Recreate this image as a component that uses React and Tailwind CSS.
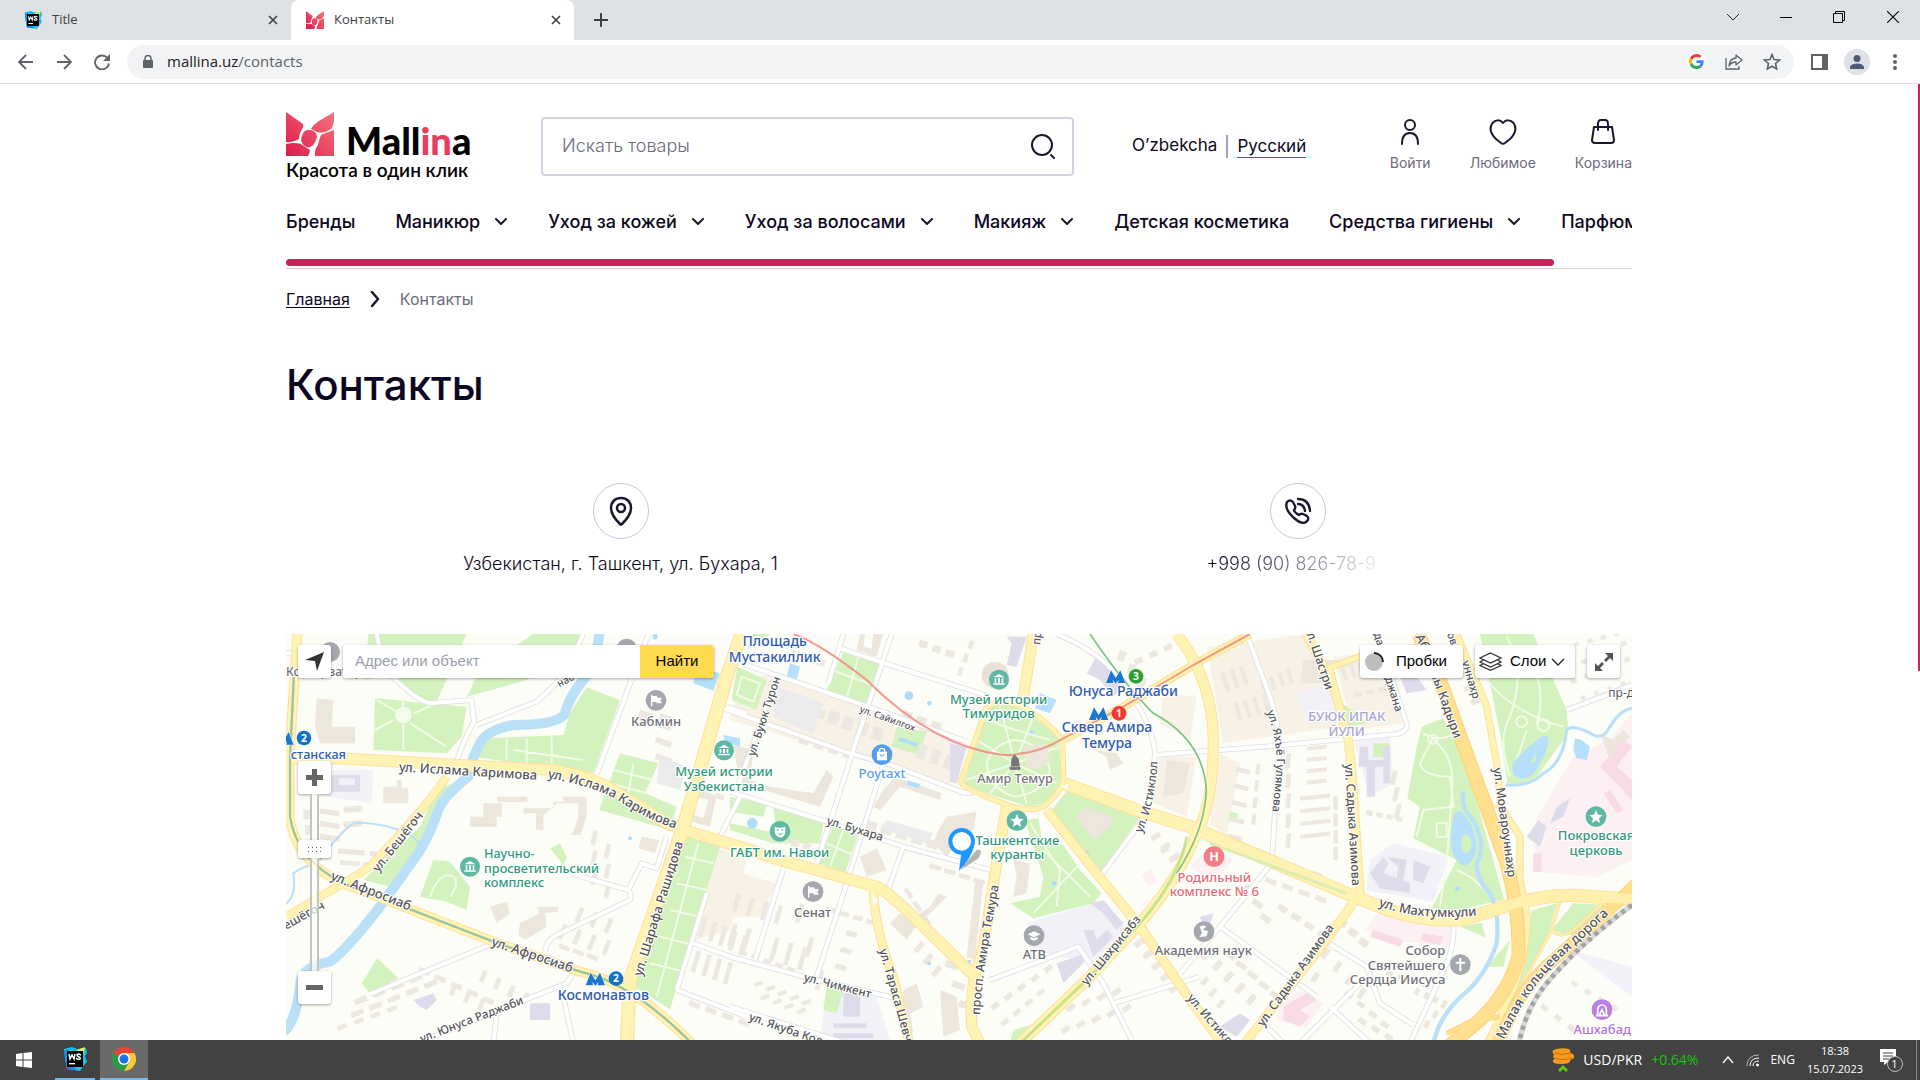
import React from "react";

const UI = "font-['Open_Sans','Noto_Sans',sans-serif]";
const SITE = "font-['Inter','Noto_Sans',sans-serif]";
const ARIAL = "font-['Liberation_Sans',Arial,sans-serif]";

/* ---------- shared icons ---------- */

function LogoMark({ className }) {
  return (
    <svg viewBox="0 0 48 44" className={className} aria-hidden="true" preserveAspectRatio="none">
      <defs>
        <linearGradient id="petal" x1="0" y1="44" x2="48" y2="0" gradientUnits="userSpaceOnUse">
          <stop offset="0" stopColor="#e0194a" />
          <stop offset="1" stopColor="#f4747c" />
        </linearGradient>
      </defs>
      <g fill="url(#petal)">
        <path d="M0 0 L17 12 Q18 15 15 19 Q13 23 13 27 Q7 31 0 30 Z" />
        <path d="M48 0 Q49 9 46 16 Q39 22 31 20 L25 17 Q28 12 33 9 Z" />
        <path d="M22 18 C29 17 33 23 30 28 C28 34 24 36 21 35 C16 33 14 29 16 24 C17 20 19 18 22 18 Z" />
        <path d="M0 32 Q9 30 15 32 Q21 36 24 38 Q24 41 22 44 L0 44 Z" />
        <path d="M48 18 L48 44 L29 44 Q28 38 32 33 Q33 28 35 23 Q41 20 48 18 Z" />
      </g>
    </svg>
  );
}

function WebStormIcon({ className }) {
  return (
    <svg viewBox="0 0 24 24" className={className} aria-hidden="true">
      <path d="M1 2 L9 0 L14 2 L23 1 L24 6 L22 9 L24 15 L21 18 L17 24 L4 22 L2 12 Z" fill="#10c4e8" />
      <path d="M1 4 L5 2 L8 18 L14 23 L4 22 Z" fill="#1489d8" />
      <path d="M14 3 L22 0 L20 8 Z" fill="#f3ee4c" />
      <rect x="4" y="4" width="16" height="16" fill="#000" />
      <path d="M6 7 L7 12 L9 8 L11 12 L12 7 M18 8 Q14 6 14 8 Q14 9 16 10 Q18 11 17 12 Q15 13 13 11" fill="none" stroke="#fff" strokeWidth="1.5" />
      <rect x="6" y="16" width="6" height="1.4" fill="#fff" />
    </svg>
  );
}

function Cross({ className }) {
  return (
    <svg viewBox="0 0 10 10" className={className} aria-hidden="true">
      <path d="M1 1 L9 9 M9 1 L1 9" stroke="currentColor" strokeWidth="1.6" fill="none" />
    </svg>
  );
}

/* ---------- browser ---------- */

function TabStrip() {
  return (
    <div className="flex h-10 items-stretch bg-[#dee1e6] text-[13px] text-[#3c4043]">
      <div className="flex w-[291px] items-center pl-6 pr-[10px]">
        <WebStormIcon className="size-[18px]" />
        <span className="ml-[10px] flex-1">Title</span>
        <button type="button" aria-label="Закрыть вкладку Title" className="grid size-4 place-items-center">
          <Cross className="size-[10px]" />
        </button>
      </div>
      <div className="flex w-[283px] items-center rounded-t-lg bg-white pl-[15px] pr-[10px]">
        <LogoMark className="size-[18px]" />
        <span className="ml-[10px] flex-1">Контакты</span>
        <button type="button" aria-label="Закрыть вкладку Контакты" className="grid size-4 place-items-center">
          <Cross className="size-[10px]" />
        </button>
      </div>
      <button type="button" aria-label="Новая вкладка" className="grid w-[53px] place-items-center">
        <svg viewBox="0 0 14 14" className="size-[14px]"><path d="M7 0 V14 M0 7 H14" stroke="#3c4043" strokeWidth="2" /></svg>
      </button>
      <div className="ml-auto flex items-center pb-[6px]">
        <button type="button" aria-label="Поиск вкладок" className="grid h-[34px] w-[53px] place-items-center">
          <svg viewBox="0 0 12 8" className="h-2 w-3"><path d="M0 1 L6 7 L12 1" fill="none" stroke="#222" /></svg>
        </button>
        <button type="button" aria-label="Свернуть" className="grid h-[34px] w-[53px] place-items-center">
          <span className="h-px w-3 bg-black" />
        </button>
        <button type="button" aria-label="Восстановить" className="grid h-[34px] w-[54px] place-items-center">
          <svg viewBox="0 0 12 12" className="size-3"><path d="M.5 2.5 H9.500 V11.500 H.5 Z M2.500 2.500 V.5 H11.500 V9.500 H9.500" fill="none" stroke="#000" /></svg>
        </button>
        <button type="button" aria-label="Закрыть" className="grid h-[34px] w-[54px] place-items-center">
          <svg viewBox="0 0 12 12" className="size-3"><path d="M0 0 L12 12 M12 0 L0 12" stroke="#000" strokeWidth="1.1" /></svg>
        </button>
      </div>
    </div>
  );
}

function Toolbar() {
  return (
    <div className="flex h-11 items-center border-b border-[#dadce0] bg-white pl-[18px] pr-5 text-[#5f6368]">
      <button type="button" aria-label="Назад" className="grid w-4 place-items-center">
        <svg viewBox="0 0 16 16" className="size-4"><path d="M15 8 H2 M8 1 L1 8 L8 15" fill="none" stroke="currentColor" strokeWidth="1.8" /></svg>
      </button>
      <button type="button" aria-label="Вперёд" className="ml-[22px] grid w-4 place-items-center">
        <svg viewBox="0 0 16 16" className="size-4"><path d="M1 8 H14 M8 1 L15 8 L8 15" fill="none" stroke="currentColor" strokeWidth="1.8" /></svg>
      </button>
      <button type="button" aria-label="Обновить" className="ml-[22px] grid w-4 place-items-center">
        <svg viewBox="0 0 16 16" className="size-4">
          <path d="M13.500 4 A7 7 0 1 0 15 9.500" fill="none" stroke="currentColor" strokeWidth="1.9" />
          <path d="M16 0 V7 H9 Z" fill="currentColor" />
        </svg>
      </button>
      <div className="ml-[17px] flex h-[34px] flex-1 items-center rounded-full bg-[#f1f3f4] pl-4 pr-[13px]">
        <svg viewBox="0 0 10 13" className="h-[13px] w-[10px]">
          <path d="M2 6 V3.500 A3 3 0 0 1 8 3.500 V6" fill="none" stroke="currentColor" strokeWidth="1.500" />
          <rect y="5" width="10" height="8" rx="1" fill="currentColor" />
        </svg>
        <a href="#address" className="ml-[14px] flex-1 text-[15px]"><span className="text-[#202124]">mallina.uz</span>/contacts</a>
        <span className="grid size-[18px] place-items-center rounded-full bg-white">
          <svg viewBox="0 0 48 48" className="size-[15px]">
            <path fill="#ea4335" d="M24 9.500c3.500 0 6.700 1.200 9.200 3.600l6.900-6.900C35.900 2.400 30.500 0 24 0 14.600 0 6.500 5.400 2.600 13.200l8 6.200C12.400 13.700 17.700 9.500 24 9.500z" />
            <path fill="#4285f4" d="M47 24.600c0-1.600-.2-3.100-.4-4.600H24v9h12.900c-.6 3-2.200 5.500-4.700 7.200l7.700 6C44.400 38 47 31.800 47 24.600z" />
            <path fill="#fbbc05" d="M10.500 28.600a14.500 14.500 0 0 1 0-9.200l-8-6.200a24 24 0 0 0 0 21.600z" />
            <path fill="#34a853" d="M24 48c6.500 0 11.900-2.100 15.900-5.800l-7.700-6c-2.200 1.500-4.900 2.300-8.200 2.300-6.300 0-11.600-4.200-13.500-9.900l-8 6.200C6.500 42.600 14.600 48 24 48z" />
          </svg>
        </span>
        <button type="button" aria-label="Поделиться" className="ml-5 grid place-items-center">
          <svg viewBox="0 0 18 16" className="h-4 w-[18px]">
            <path d="M1 4 V15 H14 V12" fill="none" stroke="currentColor" strokeWidth="1.300" />
            <path d="M11 1 L17 6 L11 11 V8 Q6 8 4 12 Q4.500 4.500 11 4 Z" fill="none" stroke="currentColor" strokeWidth="1.300" strokeLinejoin="round" />
          </svg>
        </button>
        <button type="button" aria-label="Добавить в закладки" className="ml-5 grid place-items-center">
          <svg viewBox="0 0 18 17" className="h-[17px] w-[18px]">
            <path d="M9 1.500 L11 6.500 L16.500 7 L12.500 10.500 L13.700 16 L9 13.200 L4.300 16 L5.500 10.500 L1.500 7 L7 6.500 Z" fill="none" stroke="currentColor" strokeWidth="1.600" />
          </svg>
        </button>
      </div>
      <button type="button" aria-label="Боковая панель" className="ml-[17px] grid place-items-center">
        <svg viewBox="0 0 17 16" className="h-4 w-[17px]"><path fill="currentColor" fillRule="evenodd" d="M0 0 H17 V16 H0 Z M2 2 V14 H11 V2 Z" /></svg>
      </button>
      <button type="button" aria-label="Профиль" className="ml-4 grid size-[26px] place-items-center rounded-full bg-[#dee1e6] text-[#4f5b73]">
        <svg viewBox="0 0 14 14" className="size-[14px]" fill="currentColor"><circle cx="7" cy="3.500" r="3.500" /><path d="M0 14 V12 Q1 8.500 7 8.500 Q13 8.500 14 12 V14 Z" /></svg>
      </button>
      <button type="button" aria-label="Меню" className="ml-5 grid w-[10px] place-items-center">
        <svg viewBox="0 0 4 16" className="h-4 w-1" fill="currentColor"><circle cx="2" cy="2" r="2" /><circle cx="2" cy="8" r="2" /><circle cx="2" cy="14" r="2" /></svg>
      </button>
    </div>
  );
}

/* ---------- site header ---------- */

const iconProps = { fill: "none", stroke: "#1b1730", strokeWidth: 2, strokeLinecap: "round", strokeLinejoin: "round" };

function Header() {
  return (
    <header className="flex h-[70px] items-center">
      <a href="#home" className="block w-[186px] whitespace-nowrap text-black" aria-label="Mallina">
        <span className="flex items-end">
          <LogoMark className="h-11 w-12" />
          <span className="ml-3 h-10 font-['Lato',sans-serif] text-[38px] leading-[48px] font-black">
            Mall<span className="text-[#e93d5e]">in</span>a
          </span>
        </span>
        <span className="mt-1 block font-['Lato',sans-serif] text-[19px] leading-5 font-semibold">Красота в один клик</span>
      </a>
      <form className="ml-[69px] flex h-[59px] w-[533px] items-center rounded border-2 border-[#d4d1e2] pl-[19px] pr-4" onSubmit={(e) => e.preventDefault()}>
        <input aria-label="Искать товары" placeholder="Искать товары" className="min-w-0 flex-1 text-lg font-light outline-none placeholder:text-[#6d6a7e]" />
        <button type="submit" aria-label="Найти товар" className="grid place-items-center">
          <svg viewBox="0 0 26 26" className="size-[26px]" {...iconProps}><circle cx="12" cy="12" r="10" /><path d="M21 22 L24 25" /></svg>
        </button>
      </form>
      <div className="ml-[58px] flex items-center text-[17px] text-[#0b0722]">
        <a href="#uz">O’zbekcha</a>
        <span className="mx-[9px] h-[23px] w-[2px] bg-[#a5a2b8]" />
        <a href="#ru" className="border-b border-[#d81b5b] leading-[22px]">Русский</a>
      </div>
      <div className="ml-auto flex gap-[39px] text-sm text-[#6d6a7e]">
        <a href="#login" className="flex flex-col items-center">
          <svg viewBox="0 0 20 26" className="h-[26px] w-5" {...iconProps}><circle cx="10" cy="6" r="5" /><path d="M2 25 Q2 14 10 14 Q18 14 18 25" /></svg>
          <span className="mt-2 leading-5">Войти</span>
        </a>
        <a href="#favorites" className="flex flex-col items-center">
          <svg viewBox="0 0 28 26" className="h-[26px] w-7" {...iconProps}><path d="M14 4 C17 0 22 1 24.500 4 C28 9 26 15 21 20 L16 24 Q14 25.500 12 24 L7 20 C2 15 0 9 3.500 4 C6 1 11 0 14 4 Z" /></svg>
          <span className="mt-2 leading-5">Любимое</span>
        </a>
        <a href="#cart" className="flex flex-col items-center">
          <svg viewBox="0 0 26 26" className="size-[26px]" {...iconProps}><path d="M4 8 H22 L24 21 Q24 24 21 24 H5 Q2 24 2 21 Z M8 11 V5 Q8 1 11 1 H15 Q18 1 18 5 V11" /></svg>
          <span className="mt-2 leading-5">Корзина</span>
        </a>
      </div>
    </header>
  );
}

const NAV = [
  ["Бренды", false],
  ["Маникюр", true],
  ["Уход за кожей", true],
  ["Уход за волосами", true],
  ["Макияж", true],
  ["Детская косметика", false],
  ["Средства гигиены", true],
  ["Парфюмерия", true],
];

function Nav() {
  return (
    <nav className="mt-[27px] overflow-hidden border-b border-[#d4d1e2]">
      <ul className="flex gap-10 text-lg leading-7 font-medium whitespace-nowrap text-[#0b0722]">
        {NAV.map(([label, more]) => (
          <li key={label}>
            <a href="#catalog" className="flex items-center gap-[14px]">
              {label}
              {more && <svg viewBox="0 0 14 8" className="h-2 w-[14px]" {...iconProps}><path d="M2 1 L7 6 L12 1" /></svg>}
            </a>
          </li>
        ))}
      </ul>
      <div className="mt-[23px] mb-[2px] h-[7px] w-[1268px] rounded-full bg-[#d81b5b]" />
    </nav>
  );
}

function ContactCircle({ children }) {
  return <span className="grid size-14 place-items-center rounded-full border border-[#c9c5dc]">{children}</span>;
}

/* ---------- map drawing ---------- */

const PARKS = [
  "M265 12 H560 L470 215 L430 210 L330 130 L255 150 Z",
  "M760 12 H905 L890 60 L740 150 L560 200 L600 120 Z",
  "M285 205 L345 210 L435 220 L560 230 L545 320 L500 370 L280 360 Z",
  "M920 172 L1020 210 L940 430 L590 382 L622 325 L850 315 L870 250 Z",
  "M1020 370 L1135 400 L1095 490 L1190 530 L1170 600 L958 540 Z",
  "M470 480 L555 445 L480 530 L430 640 L330 770 L250 750 L420 590 Z",
  "M1205 615 L1320 650 L1170 1138 L1065 1070 Z",
  "M420 800 L460 690 L510 695 L570 770 L560 840 L500 815 Z",
  "M245 1060 L292 985 L355 1045 L270 1092 Z",
  "M810 655 L840 640 L860 680 L850 705 Z",
  "M1372 110 L1460 150 L1430 240 L1355 210 Z",
  "M1690 65 L1800 100 L1765 222 L1640 180 Z",
  "M1850 290 L1940 305 L1915 375 L1835 350 Z",
  "M2120 232 Q2170 210 2220 235 L2335 315 L2345 445 Q2320 530 2240 528 L2050 468 Z",
  "M2365 478 L2580 562 L2460 730 L2310 545 Z",
  "M2235 570 L2275 565 L2285 620 L2350 645 L2400 720 L2465 790 L2440 820 L2260 865 L2190 820 L2280 800 L2290 740 Z",
  "M1660 585 L1735 610 L1695 730 L1615 700 Z",
  "M1350 500 L1460 522 L1450 560 L1350 545 Z M1480 530 L1630 580 L1620 640 L1480 640 L1350 600 V580 L1490 610 Z",
  "M1420 12 H1470 L1400 60 Z",
  "M3600 12 H3760 L3820 150 L3860 240 L3865 310 L3770 440 L3730 465 L3682 460 L3662 320 Z",
  "M3425 290 L3490 265 L3550 370 L3620 620 L3672 808 L3530 842 L3455 835 L3530 690 L3400 625 L3420 530 L3382 505 L3410 350 Z",
  "M3540 890 L3605 878 L3618 925 L3590 910 Z",
  "M3755 842 L3830 820 L3800 930 L3700 1110 L3735 980 Z",
  "M3880 820 L3990 825 L3890 920 L3815 900 Z",
  "M3620 1010 L3690 930 L3670 1010 Z",
  "M3180 215 L3230 250 L3260 280 L3200 290 Z",
  "M3280 340 H3328 V382 H3280 Z M2850 545 L2875 550 L2870 575 L2845 570 Z",
  "M1640 1070 L1690 1085 L1670 1150 L1630 1140 Z M2200 1200 L2270 1180 L2220 1240 H2190 Z",
];

const PINK = [
  "M4056 250 L3990 330 L3880 380 L3820 480 L3770 560 L3760 725 L3950 742 L4056 690 Z",
  "M3300 840 L3520 880 L3510 950 L3330 930 L3255 900 Z",
  "M2730 710 L2790 650 L2860 690 L2800 760 Z",
  "M2610 715 L2635 755 L2605 770 L2585 735 Z",
  "M3000 1120 L3060 1080 L3130 1120 L3080 1190 L2990 1170 Z",
];

const SAND = [
  "M1500 130 L2050 320 L2010 470 L1350 270 L1380 150 Z",
  "M1300 650 L1400 690 L1350 900 L1240 930 L1270 780 Z",
  "M1350 720 L1490 760 L1440 860 L1350 860 Z",
  "M2780 50 L3080 12 L3180 290 L2830 340 Z",
  "M2820 370 L2880 400 L2840 620 L2790 580 Z",
  "M3160 80 L3340 60 L3370 280 L3220 300 Z",
  "M2650 190 L2750 200 L2730 330 L2640 280 Z",
  "M2640 380 H2750 L2720 560 L2600 510 Z",
];

const LILAC = [
  "M3340 640 L3505 680 L3460 815 L3260 780 L3270 690 Z",
  "M3220 330 L3330 320 L3340 460 L3270 500 Z",
  "M2240 880 L2440 820 L2540 890 L2440 1000 L2250 960 Z",
  "M150 420 H280 L275 520 L140 500 Z",
  "M1640 1080 L1790 1100 L1830 1230 H1620 Z",
  "M3050 190 L3150 160 L3190 240 L3080 270 Z",
  "M3870 960 L4056 1010 V1100 Z",
];

const BLOCKS = [
  "M110 205 L160 210 L155 290 L225 290 V340 H120 L105 290 Z",
  "M610 520 H665 V560 H650 V590 H570 V560 H610 Z M652 500 H742 V516 H652 Z M730 535 H820 V515 H850 V500 H920 V560 L900 615 H875 L895 565 V520 H830 L790 555 V600 H768 V550 H730 Z",
  "M1085 620 L1138 630 L1125 670 L1075 655 Z M1255 480 L1310 495 L1290 590 L1235 575 L1240 555 L1270 565 L1285 510 L1250 500 Z",
  "M310 470 H350 V450 H365 V475 H385 V520 H310 Z",
  "M720 880 L780 850 L770 830 L835 830 V845 L795 850 L800 890 L735 930 L715 915 Z",
  "M630 830 L680 815 L690 850 L650 880 Z",
  "M1780 12 H1810 L1790 80 L1730 60 L1740 12 L1755 14 L1750 50 L1775 56 Z",
  "M1810 480 L1845 440 L1985 490 L1980 510 L1860 470 L1800 540 L1780 530 Z",
  "M1740 680 L1790 655 L1820 720 L1760 740 Z",
  "M2000 560 L2090 545 L2080 600 L2050 620 L2000 680 L1960 640 L1975 600 Z",
  "M1950 830 L1975 790 L2000 800 L1900 900 L1880 930 L1830 880 L1860 850 L1890 870 Z",
  "M2085 760 L2110 755 L2085 990 L2060 980 Z",
  "M2230 350 L2300 340 L2310 390 L2280 420 L2240 410 Z",
  "M2440 360 L2510 370 L2530 400 L2490 420 L2480 380 Z",
  "M2660 390 L2730 400 L2710 490 L2650 500 Z",
  "M2410 530 L2500 560 L2490 590 L2440 630 L2390 560 Z",
  "M2200 690 L2250 700 L2240 790 L2200 800 L2210 740 Z",
  "M1870 1080 L1910 1060 L1930 1130 L1890 1150 L1900 1210 L1870 1200 Z M1980 1080 L2030 1100 L2040 1200 L1990 1220 Z",
  "M1360 345 L1420 360 L1410 450 L1470 470 L1600 490 L1640 420 L1660 440 L1620 530 L1380 460 Z",
  "M3070 90 H3220 V110 H3130 V160 H3060 Z",
  "M3960 310 L4000 330 L4030 300 L4050 320 L3990 390 Z",
];

const LILAC_BLOCKS = [
  "M155 435 H240 V485 H155 Z M175 445 H225 V465 H175 Z",
  "M3240 350 H3265 V390 H3310 V350 L3330 350 V460 H3310 V410 H3285 V500 H3260 V410 H3235 Z",
  "M3270 730 L3310 680 L3325 700 L3310 730 L3390 760 V790 L3300 775 Z M3320 680 L3380 690 L3370 750 L3350 745 L3355 710 Z M3400 690 L3450 710 L3430 760 L3400 750 Z",
  "M2180 20 H2240 L2210 110 L2180 105 L2195 40 Z M2010 340 L2060 350 L2030 460 L2010 455 Z",
  "M2420 130 L2450 80 L2500 120 L2540 150 L2500 200 L2460 150 Z",
  "M2430 820 L2470 810 L2530 880 L2510 900 L2470 850 Z M2410 900 L2440 900 L2450 930 L2480 900 L2500 920 L2440 980 Z",
  "M2330 1000 L2420 970 L2410 1000 L2350 1060 Z",
  "M2760 860 L2800 850 L2780 920 Z M2820 1190 L2880 1150 L2910 1170 L2870 1220 Z",
  "M3740 620 L3775 570 L3800 590 L3780 650 Z M3830 530 L3870 505 L3850 560 L3810 580 Z",
  "M400 1110 L460 1090 L470 1110 L440 1140 L420 1130 Z",
  "M750 1120 H810 V1170 H750 Z M1660 1180 H1760 V1195 H1660 Z M1660 1210 H1780 V1225 H1660 Z M1690 1090 H1740 V1160 H1690 Z",
  "M3360 140 H3410 L3440 180 L3380 190 Z",
];

const PINK_BLOCKS = [
  "M4056 350 L4010 410 L4056 450 V510 L3980 430 L3960 410 L4030 330 Z M3990 480 L4030 540 L4010 550 L3970 490 Z M3760 670 H3785 V725 H3760 Z",
  "M3280 900 L3370 930 L3360 950 L3270 920 Z M3430 910 L3490 920 L3480 945 L3420 930 Z",
  "M3010 1130 L3080 1090 L3110 1110 L3060 1140 L3090 1160 L3060 1190 L3010 1170 Z",
];

/* rows of small houses: x, y, step x, step y, count, width, height, angle */
const HOUSES = [
  [70, 540, 5, 45, 3, 22, 28, 0], [120, 535, 0, 38, 3, 60, 16, 8], [190, 530, 0, 45, 2, 56, 18, -4],
  [175, 655, 95, 8, 2, 80, 16, 4], [180, 690, 70, 6, 2, 60, 14, 4],
  [220, 1110, 55, -22, 4, 40, 18, -22], [210, 1150, 55, -22, 5, 40, 16, -22], [420, 1010, 48, 22, 5, 34, 16, 22],
  [520, 1060, 42, 22, 4, 14, 36, 22], [610, 1020, 42, 22, 4, 14, 36, 22], [170, 1190, 50, -18, 4, 30, 14, -22],
  [850, 880, 44, 16, 4, 14, 48, 22], [900, 830, 44, 16, 3, 14, 46, 22], [840, 940, 42, 14, 3, 34, 14, 22],
  [940, 600, 0, 60, 3, 14, 44, 12], [980, 640, 0, 60, 3, 14, 44, 12], [1110, 550, 20, 20, 1, 30, 16, 22],
  [1270, 860, 30, 14, 5, 14, 60, 16], [1250, 960, 32, 12, 4, 14, 66, 16], [1230, 1110, 50, 18, 4, 34, 16, 22],
  [1360, 880, 42, 14, 6, 14, 70, 16], [1370, 790, 42, 12, 4, 14, 56, 16], [1560, 820, 30, 100, 3, 14, 60, 16],
  [1640, 830, 40, 12, 4, 30, 14, 14], [1700, 900, -16, 50, 3, 34, 16, 16], [1420, 1060, 36, 14, 5, 28, 12, -20],
  [1440, 1100, 36, 14, 4, 28, 12, -20], [1380, 960, 36, 12, 5, 24, 12, 18], [1560, 320, 44, 14, 4, 30, 20, 16],
  [1560, 220, 44, 14, 3, 34, 26, 16], [1650, 240, 44, 16, 4, 32, 40, 16], [1870, 240, 44, 16, 3, 30, 18, 18],
  [1920, 340, 40, 16, 3, 26, 44, 18], [1540, 60, 36, 12, 3, 26, 20, 16], [1920, 30, 40, 14, 3, 26, 20, 16],
  [2070, 30, -16, 40, 3, 14, 26, 16], [1470, 600, 34, 12, 4, 24, 24, 16], [1760, 570, 46, 14, 5, 34, 26, 14],
  [1950, 700, 44, 14, 4, 36, 14, 16], [1870, 780, 26, 40, 4, 14, 34, -36], [1900, 960, 26, 36, 3, 36, 16, -50],
  [2000, 990, 20, 60, 3, 40, 20, 20], [2130, 1130, 40, -28, 5, 26, 16, -40], [2160, 1180, 36, -30, 4, 26, 14, -40],
  [2310, 1150, 46, -16, 5, 28, 16, -34], [2340, 1200, 46, -16, 5, 28, 16, -34], [2560, 940, 26, 34, 5, 32, 18, -34],
  [2610, 620, 30, 30, 3, 30, 16, -30], [2640, 660, 26, 28, 3, 26, 14, -30], [2520, 60, 30, 40, 3, 22, 30, 20],
  [2560, 90, 44, -20, 3, 26, 18, -26], [2820, 130, 28, -10, 3, 14, 60, -18], [2860, 220, 28, -8, 4, 12, 56, -18],
  [2940, 150, 26, -10, 4, 12, 44, -16], [2870, 410, -6, 50, 5, 44, 14, 14], [2930, 400, -4, 50, 4, 12, 34, 8],
  [3080, 350, 0, 34, 4, 60, 12, -6], [3060, 500, 0, 38, 4, 90, 12, -6], [3160, 500, 0, 50, 4, 14, 40, 0],
  [3020, 370, 0, 60, 5, 14, 44, 6], [3180, 110, 26, -6, 5, 12, 46, -18], [3220, 190, 36, -8, 4, 26, 12, -10],
  [3260, 540, 30, 6, 4, 20, 14, 14], [3340, 420, 6, 50, 3, 14, 44, 14], [2880, 640, 54, 20, 5, 36, 18, 22],
  [2960, 740, 50, 18, 4, 34, 16, 22], [2900, 760, 24, 44, 3, 34, 18, 36], [3000, 820, 40, 26, 4, 30, 18, 34],
  [2760, 980, 34, 34, 5, 34, 18, -50], [2840, 960, 34, 30, 5, 34, 16, 34], [2760, 1060, 24, 34, 3, 28, 14, -50],
  [3180, 860, 32, 30, 3, 30, 22, 34], [3120, 980, 36, 40, 4, 34, 16, -56], [3060, 1020, 30, 30, 2, 30, 16, -56],
  [3200, 1080, 36, 30, 4, 26, 16, 34], [3240, 1160, 40, 24, 4, 26, 16, 34], [3320, 1020, 36, 12, 4, 22, 14, 20],
  [3400, 1090, 28, 12, 3, 20, 14, -60], [3480, 1130, -26, 30, 3, 24, 14, -60], [3530, 130, 20, 40, 3, 24, 18, -20],
  [3860, 110, 40, -18, 5, 18, 14, -24], [3870, 150, 40, -16, 5, 18, 14, -24], [3900, 200, 40, -14, 4, 14, 12, -24],
  [3880, 40, 40, -10, 4, 16, 12, -24], [3880, 1050, 40, 24, 4, 20, 14, 40], [3790, 1120, 40, 30, 3, 22, 16, 40],
  [1260, 470, 50, 18, 3, 26, 16, 20], [1130, 270, 0, 50, 3, 50, 18, 20], [1080, 240, 60, 10, 2, 44, 30, 16],
];

const RIVERS = [
  ["M958 12 Q950 80 935 120 Q870 190 855 250 Q840 285 700 285 Q620 300 600 340 Q570 400 565 440 Q490 500 475 540 Q440 640 400 690 L300 830 Q200 960 150 995 Q60 1010 60 1070 Q50 1160 18 1200", 30],
  ["M120 690 Q200 580 230 578 Q330 580 400 620 L415 640", 6],
  ["M18 820 Q50 800 40 730 Q80 700 120 705", 6],
  ["M4056 235 Q4020 240 3990 290 Q3970 330 3940 315 Q3880 280 3860 300 Q3850 400 3790 430 Q3750 470 3680 465", 9],
  ["M3550 490 Q3540 530 3580 570 Q3620 650 3590 700 Q3590 750 3630 790 Q3660 850 3650 940 Q3620 1030 3560 1085 Q3480 1150 3460 1240", 13],
];

const PONDS = [
  "M3700 400 Q3720 370 3760 340 Q3800 300 3806 330 Q3800 370 3780 400 Q3760 450 3720 445 Q3690 435 3700 400 Z",
  "M3520 560 Q3530 530 3550 550 Q3590 600 3590 650 Q3580 710 3545 705 Q3510 680 3512 620 Z",
  "M3885 325 L3905 330 L3930 350 L3920 390 L3890 385 L3880 360 Z",
  "M2280 190 L2330 210 L2310 250 L2265 235 Z",
  "M1530 100 L1560 110 L1550 148 L1520 140 Z",
  "M1250 110 L1320 130 L1300 182 L1240 160 Z",
  "M1330 315 L1380 325 V350 L1335 335 Z",
];

const WHITE_ROADS = [
  "M290 12 L310 110 Q400 210 450 220 L575 210 L582 275 Q550 330 530 395",
  "M590 285 L770 215 L850 140 L910 12",
  "M1105 12 L950 432",
  "M270 1092 L640 940", "M795 965 Q800 930 830 915 L1050 810 Q1055 790 1045 780 L870 730 M1045 780 L1085 700 L1130 715 L1160 620",
  "M420 1235 L860 1060 L880 1030 M850 1100 L880 1240 M650 1150 L640 1240",
  "M1240 940 L1380 990 M1190 1080 L1400 1160 M1190 1080 L1280 790 M1340 230 L1400 250",
  "M18 70 H60 M1385 490 L1320 620",
  "M1370 95 L1750 225 L2060 335", "M1690 12 L1645 160", "M1680 55 L1830 105 L2130 200",
  "M1835 12 L1720 360 L1610 700", "M1330 235 L1710 370 L1820 400 L2050 488 L2080 488",
  "M1495 130 L1370 480", "M1350 485 L1640 575 L1870 650 L2140 722", "M1870 650 L1820 790",
  "M1810 400 L1700 760 L1610 1040", "M1515 700 L1425 990", "M1350 980 L1570 1040 L1850 1105",
  "M1350 1130 L1700 1240", "M2130 1050 L2395 950 L2470 1060 L2560 1240", "M2500 1120 L2760 1040",
  "M2460 740 L2580 580 Q2610 530 2625 370 Q2620 300 2570 220 Q2500 80 2330 12", "M2625 375 L2980 348 L3350 312 Q3385 305 3380 280 L3290 12",
  "M2900 12 L2970 200 Q3000 300 2998 340 L2975 700 L2820 890 L2700 1030", "M2820 890 L3110 1100",
  "M3130 930 L3260 1010 L3300 1120 L3400 1185", "M3520 880 Q3525 940 3500 1000 L3390 1240",
  "M3240 1060 L3060 1240 M3150 1130 L3270 1240 M2950 1180 L3010 1240", "M3860 240 L4056 165",
];

const YELLOW_ROADS = [
  ["M52 12 L28 385 V560 Q50 700 190 760 L640 935 L900 1025 Q1060 1060 1240 1245", 30],
  ["M28 385 H180 L360 395 L820 420 Q930 440 1000 480 L1160 580 L1210 600 L1380 650 L1500 690 L1790 770 Q1830 790 1910 870 L2085 1040", 36],
  ["M1385 12 L1340 140 L1210 590 L1120 850 L1050 1050 L1040 1240", 42],
  ["M500 440 Q440 530 270 710 L190 760 L18 860", 26],
  ["M2260 12 L2225 235", 34],
  ["M2120 232 L2042 455 Q2045 475 2170 520 Q2240 550 2290 530 Q2340 490 2350 455 L2348 330 Q2300 270 2225 228 Q2150 205 2120 232 Z", 18],
  ["M2180 530 L2150 700 L2110 950 L2085 1040 Q2070 1100 2075 1190 L2100 1240", 34],
  ["M2355 462 L2570 540 L2730 590 L3200 790 L3320 838 Q3440 878 3550 868 L3680 828 Q3800 790 3900 797 L4056 808", 40],
  ["M2690 12 Q2798 150 2800 330 Q2800 520 2750 610 Q2700 740 2580 880 L2430 1040 L2215 1245", 34],
  ["M2300 540 L2450 730 L2580 890 L2710 1080 L2830 1245", 30],
  ["M2350 330 L2530 230 L2740 105 L2910 12", 26],
  ["M3080 12 Q3120 100 3150 130 L3205 330 L3215 420 L3240 790 L3140 930 L2890 1245", 28],
  ["M1780 780 Q1785 900 1840 1040 L1890 1245", 28],
  ["M3150 112 L3260 72 L3420 50", 20],
  ["M3530 12 L3620 230 L3650 400 L3662 530 L3720 620 V750 L3742 860 Q3740 1000 3680 1120 L3620 1245", 22],
  ["M3650 530 L3640 530 Q3600 450 3590 420 M3840 810 L3815 900 Q3840 930 3880 900 L3990 800 M3815 900 L3680 1150", 10],
];

const ORANGE_ROADS = [
  ["M3415 12 L3480 150 L3600 480 L3680 700 Q3720 850 3715 980 Q3690 1080 3600 1170 L3510 1245", 42],
  ["M4070 760 Q3970 860 3820 990 Q3740 1060 3700 1140 L3650 1245", 38],
  ["M3500 1210 L3570 1175 L3660 1160", 14],
];

const STREETS = [
  ["s1", "M356 424 L780 450", "ул. Ислама Каримова", 39],
  ["s2", "M802 444 Q950 470 1020 515 Q1100 570 1200 600", "ул. Ислама Каримова", 39],
  ["s3", "M295 728 L440 545", "ул. Бешёгоч", 37],
  ["s4", "M18 900 L160 820", "ешёгоч", 37],
  ["s5", "M150 748 L420 855", "ул. Афросиаб", 39],
  ["s6", "M632 946 L900 1036", "ул. Афросиаб", 39],
  ["s7", "M1085 1040 L1225 590", "ул. Шарафа Рашидова", 38],
  ["s8", "M425 1238 L760 1110", "ул. Юнуса Раджаби", 35],
  ["s9", "M1424 380 L1520 90", "ул. Буюк Турон", 34],
  ["s10", "M1737 245 L1940 318", "ул. Сайилгох", 28],
  ["s11", "M1638 582 L1840 644", "ул. Бухара", 35],
  ["s12", "M1570 1052 L1800 1112", "ул. Чимкент", 35],
  ["s13", "M1405 1170 L1720 1280", "ул. Якуба Коласа", 35],
  ["s14", "M1798 960 L1890 1290", "ул. Тараса Шевченко", 36],
  ["s15", "M2100 1155 Q2105 1020 2170 700", "просп. Амира Темура", 37],
  ["s16", "M2420 1068 L2600 850", "ул. Шахрисабз", 36],
  ["s17", "M2585 610 Q2628 520 2635 360", "ул. Истиклол", 35],
  ["s18", "M2960 245 Q2990 320 2990 400 Q2985 480 2970 600", "ул. Яхъё Гулямова", 34],
  ["s19", "M3195 402 L3222 860", "ул. Садыка Азимова", 37],
  ["s20", "M2950 1192 L3180 870", "ул. Садыка Азимова", 37],
  ["s21", "M3295 828 Q3440 880 3640 850", "ул. Махтумкули", 39],
  ["s22", "M3640 415 Q3660 560 3690 790", "ул. Мовароуннахр", 37],
  ["s23", "M3672 1230 Q3740 1080 3840 985 Q3940 900 4040 800", "Малая кольцевая дорога", 40],
  ["s24", "M3452 130 L3545 390", "лы Кадыри", 38],
  ["s25", "M3405 20 L3450 110", "Аб", 38],
  ["s26", "M3080 12 L3165 260", "л. Шастри", 36],
  ["s27", "M3315 145 L3360 290", "джана", 34],
  ["s28", "M3545 95 L3600 280", "уннахр", 34],
  ["s29", "M2720 1105 L2880 1290", "ул. Истиклол", 36],
  ["s30", "M2280 46 L2290 -40", "пр", 34],
  ["s31", "M838 172 L900 140", "наб", 30],
  ["s32", "M3282 12 L3300 80", "да", 32],
  ["s33", "M3500 12 L3530 90", "ова", 32],
];

function Museum({ x, y }) {
  return (
    <g transform={`translate(${x} ${y})`}>
      <circle r="30" fill="#5fb8a5" />
      <path d="M-17 -7 L0 -17 L17 -7 Z M-13 -4 H-8 V9 H-13 Z M-3 -4 H3 V9 H-3 Z M8 -4 H13 V9 H8 Z M-17 11 H17 V15 H-17 Z" fill="#fff" />
    </g>
  );
}

function Star({ x, y }) {
  return (
    <g transform={`translate(${x} ${y})`}>
      <circle r="31" fill="#5fb8a5" />
      <path d="M0 -20 L6 -6 L20 -5 L9 5 L12 19 L0 11 L-12 19 L-9 5 L-20 -5 L-6 -6 Z" fill="#fff" />
    </g>
  );
}

function Flag({ x, y }) {
  return (
    <g transform={`translate(${x} ${y})`}>
      <circle r="31" fill="#a4a7ad" />
      <path d="M-15 -17 H-11 V-13 H2 L6 -8 H18 L13 1 L18 9 H4 L0 5 H-11 V18 H-15 Z" fill="#fff" />
    </g>
  );
}

function Metro({ x, y, line, color, lx }) {
  return (
    <g transform={`translate(${x} ${y})`}>
      <path d="M-29 20 L-14 -18 L0 5 L14 -18 L29 20 H7 L9 10 L0 22 L-9 10 L-7 20 Z" fill="#1c77cf" stroke="#fff" strokeWidth="3" paintOrder="stroke" />
      <circle cx={lx} r="22" fill={color} />
      <text x={lx} y="11" textAnchor="middle" fontSize="31" fontWeight="700" fill="#fff">{line}</text>
    </g>
  );
}

function Label({ x, y, lines, color, size = 39, anchor = "middle", step = 44, weight = 500 }) {
  return (
    <text textAnchor={anchor} fill={color} fontSize={size} fontWeight={weight} stroke="#fff" strokeWidth="7" strokeLinejoin="round" paintOrder="stroke">
      {lines.map((line, i) => (
        <tspan key={line} x={x} y={y + i * step}>{line}</tspan>
      ))}
    </text>
  );
}

function MapDrawing() {
  const green = "#2f9a80";
  const grey = "#6f7176";
  const blue = "#2f5cb0";
  return (
    <svg viewBox="18 12 4038 1218" preserveAspectRatio="xMidYMin slice" className="absolute inset-0 size-full font-['Noto_Sans',sans-serif]" role="img" aria-label="Карта Ташкента">
      <rect x="18" y="12" width="4038" height="1600" fill="#fcfdf6" />
      <path d={SAND.join(" ")} fill="#f8f1e6" />
      <path d={PINK.join(" ")} fill="#fcf0f2" />
      <path d={LILAC.join(" ")} fill="#f2f1f8" />
      <path d={PARKS.join(" ")} fill="#d3f2bd" />
      <g fill="none" stroke="#f3fbe9" strokeWidth="6">
        <path d="M370 205 V230 M370 280 V360 M285 300 L340 270 M400 250 L470 220 M390 280 L500 350 M290 210 L350 245" />
        <circle cx="370" cy="255" r="22" fill="#f3fbe9" />
        <path d="M680 325 V390 M740 325 V400 M815 320 V405 M700 360 L910 390 M1060 400 L1040 520 M1000 420 L1120 450 M990 460 L1100 490 M1255 640 L1130 1100 M1215 680 L1300 700 M1190 760 L1280 780 M1170 840 L1260 860 M1140 920 L1240 945 M1110 1000 L1215 1025" />
        <path d="M450 800 Q480 720 520 740 Q540 760 510 800" />
        <path d="M1655 120 L1780 165 M1735 80 L1700 205 M1385 140 L1440 160 L1420 215 L1370 195 Z" />
        <path d="M2205 330 Q2140 340 2120 400 Q2130 480 2205 500 Q2290 490 2310 420 Q2290 340 2205 330 M2205 400 L2060 450 M2205 400 L2160 230 M2205 400 L2260 260 M2205 400 L2340 350 M2205 400 L2330 460 M2205 400 L2240 520 M2205 400 L2130 490 M2205 400 L2090 330 M2120 270 Q2200 300 2310 330" />
        <path d="M2290 660 L2430 800 M2400 700 L2260 850 M2250 580 L2340 720 L2330 830 M1640 640 L1730 680 M1690 600 L1650 710" />
        <path d="M3620 150 Q3700 250 3850 290 M3680 20 Q3740 120 3690 260 Q3650 330 3690 440 M3750 60 Q3800 200 3770 280 M3740 300 L3700 420 M3460 320 L3420 400 Q3430 440 3510 440 L3520 530 L3430 540 L3410 620 M3460 330 Q3530 380 3515 500 L3500 700 L3480 830 M3470 580 H3500 V620 H3470 Z M3530 720 L3570 740 L3640 800 M3430 310 Q3480 340 3520 310" />
        <circle cx="3725" cy="275" r="16" fill="none" /><circle cx="3790" cy="285" r="18" fill="none" /><circle cx="3458" cy="328" r="14" />
      </g>
      <path d={BLOCKS.join(" ")} fill="#ece6dc" fillRule="evenodd" />
      <g fill="#ece7e0">
        {HOUSES.map(([x, y, dx, dy, n, w, h, a]) =>
          Array.from({ length: n }, (_, i) => (
            <rect key={`${x}-${y}-${i}`} width={w} height={h} transform={`translate(${x + dx * i} ${y + dy * i}) rotate(${a})`} />
          ))
        )}
      </g>
      <circle cx="2145" cy="135" r="40" fill="#e9e1d5" />
      <path d={LILAC_BLOCKS.join(" ")} fill="#dedbea" fillRule="evenodd" />
      <path d={PINK_BLOCKS.join(" ")} fill="#f8dbe4" />
      <path d="M1140 380 L1220 410 L1200 480 L1130 460 Z M1490 170 L1630 220 L1600 310 L1480 260 Z M1820 570 L1960 610 L1940 640 L1800 595 Z" fill="#ebebed" />

      <g fill="none" stroke="#b9e0f7" strokeLinecap="round">
        {RIVERS.map(([d, w]) => <path key={d} d={d} strokeWidth={w} />)}
      </g>
      <path d={PONDS.join(" ")} fill="#b5dffa" />
      <path d="M3750 400 L3770 370 L3765 395 Z M3545 620 Q3570 600 3575 650 Q3560 680 3545 660 Z" fill="#d3f2bd" />
      <g fill="#b0dcfa">
        <circle cx="1887" cy="197" r="13" /><circle cx="1948" cy="220" r="7" /><circle cx="1417" cy="580" r="16" />
        <circle cx="2254" cy="305" r="6" /><circle cx="2418" cy="672" r="9" /><circle cx="2322" cy="760" r="7" />
        <circle cx="1050" cy="625" r="6" /><circle cx="1947" cy="1000" r="6" /><circle cx="2068" cy="995" r="6" />
        <circle cx="3532" cy="776" r="7" /><circle cx="1125" cy="20" r="8" />
        <path d="M1860 322 L1915 340 L1910 350 L1855 332 Z M1885 452 L1920 462 L1915 474 L1880 464 Z" />
      </g>

      <g fill="none" strokeLinejoin="round">
        {WHITE_ROADS.map((d) => <path key={d} d={d} stroke="#dedfe2" strokeWidth="17" />)}
        {WHITE_ROADS.map((d) => <path key={d} d={d} stroke="#fff" strokeWidth="12" />)}
        {YELLOW_ROADS.map(([d, w]) => <path key={d} d={d} stroke="#ffdf9b" strokeWidth={w} />)}
        {YELLOW_ROADS.map(([d, w]) => <path key={d} d={d} stroke="#fff3b4" strokeWidth={w - 6} />)}
        {ORANGE_ROADS.map(([d, w]) => <path key={d} d={d} stroke="#ffd07a" strokeWidth={w} />)}
        {ORANGE_ROADS.map(([d, w]) => <path key={d} d={d} stroke="#ffe08f" strokeWidth={w - 6} />)}
        <path d="M3540 870 L3680 828 Q3800 790 3900 797 L4056 808" stroke="#fff0ad" strokeWidth="30" />
        <path d="M1775 790 L1795 812 L1780 830 Z M2345 470 L2362 462 L2362 480 Z" fill="#fcfdf6" stroke="none" />
        <path d="M42 130 L30 385 V560 Q50 690 190 760 L640 935 L900 1025 Q1060 1060 1240 1245" stroke="#9dc3a0" strokeWidth="7" />
        <path d="M2720 620 Q2700 740 2580 880 L2430 1040 L2215 1245" stroke="#a5d86e" strokeWidth="9" opacity=".6" />
        <path d="M2430 12 Q2530 160 2620 250 Q2770 330 2779 480 Q2775 600 2690 730" stroke="#7ec387" strokeWidth="5" />
        <path d="M2790 640 L3200 790" stroke="#dbedb0" strokeWidth="9" />
        <path d="M1540 12 Q1620 40 1760 150 Q1960 350 2170 375 Q2270 375 2350 325 L2530 230 L2740 105 L2910 12" stroke="#f2827a" strokeWidth="6" opacity=".8" />
        <path d="M4056 825 Q3900 940 3800 1060 Q3740 1130 3715 1245" stroke="#d8d8d8" strokeWidth="16" />
        <path d="M4056 825 Q3900 940 3800 1060 Q3740 1130 3715 1245" stroke="#a3a3a3" strokeWidth="14" strokeDasharray="13 13" />
      </g>

      <g fill="#55565a" stroke="#fff" strokeWidth="6" strokeLinejoin="round" paintOrder="stroke">
        {STREETS.map(([id, d, text, size]) => (
          <g key={id}>
            <path id={id} d={d} fill="none" stroke="none" />
            <text fontSize={size} fontWeight="500"><textPath href={`#${id}`}>{text}</textPath></text>
          </g>
        ))}
        <text x="3985" y="202" fontSize="36">пр-д</text>
      </g>

      <circle cx="150" cy="66" r="30" fill="#a4a7ad" />
      <Label x={18} y={138} lines={["Консерватория"]} color={grey} size={36} anchor="start" />
      <circle cx="1040" cy="56" r="30" fill="#a4a7ad" />
      <Flag x={1128} y={211} />
      <Label x={1128} y={288} lines={["Кабмин"]} color={grey} />
      <Metro x={12} y={324} line="2" color="#1273c4" lx={60} />
      <Label x={198} y={388} lines={["станская"]} color={blue} size={38} anchor="end" />
      <Museum x={1332} y={361} />
      <Label x={1332} y={438} lines={["Музей истории", "Узбекистана"]} color={green} />
      <Museum x={570} y={710} />
      <Label x={612} y={684} lines={["Научно-", "просветительский", "комплекс"]} color={green} size={38} anchor="start" />
      <Metro x={946} y={1046} line="2" color="#1273c4" lx={62} />
      <Label x={970} y={1110} lines={["Космонавтов"]} color={blue} size={42} />

      <Label x={1484} y={48} lines={["Площадь", "Мустакиллик"]} color={blue} size={42} step={48} />
      <Museum x={2157} y={149} />
      <Label x={2156} y={221} lines={["Музей истории", "Тимуридов"]} color={green} />
      <Metro x={2507} y={139} line="3" color="#2f9e35" lx={61} />
      <Label x={2530} y={198} lines={["Юнуса Раджаби"]} color={blue} size={42} />
      <Metro x={2456} y={250} line="1" color="#f2392f" lx={61} />
      <Label x={2481} y={307} lines={["Сквер Амира", "Темура"]} color={blue} size={42} step={48} />
      <g transform="translate(1806 374)">
        <circle r="31" fill="#549eeb" />
        <path d="M-15 -9 H15 V17 H-15 Z" fill="#fff" />
        <path d="M-8 -8 V-12 Q-8 -19 0 -19 Q8 -19 8 -12 V-8" fill="none" stroke="#fff" strokeWidth="4" />
        <path d="M-7 0 Q0 9 7 0" fill="none" stroke="#549eeb" strokeWidth="3" />
      </g>
      <Label x={1806} y={445} lines={["Poytaxt"]} color="#549eeb" />
      <path d="M2190 418 H2220 V412 H2190 Z M2194 408 L2196 385 H2214 L2218 408 Z M2198 382 Q2204 370 2206 378 L2212 384 Z" fill="#77757a" stroke="#77757a" strokeWidth="3" />
      <Label x={2205} y={460} lines={["Амир Темур"]} color="#77757a" size={38} />
      <g transform="translate(1500 604)">
        <circle r="31" fill="#5fb8a5" />
        <path d="M-16 -14 Q0 -8 16 -14 V4 Q12 18 2 19 Q-12 15 -16 4 Z" fill="#fff" />
        <path d="M-10 -4 H-3 M3 -4 H10 M-7 6 Q0 14 8 6" stroke="#5fb8a5" strokeWidth="3" fill="none" />
      </g>
      <Label x={1499} y={681} lines={["ГАБТ им. Навои"]} color={green} />
      <Star x={2211} y={572} />
      <Label x={2212} y={644} lines={["Ташкентские", "куранты"]} color={green} />
      <Flag x={1599} y={785} />
      <Label x={1598} y={860} lines={["Сенат"]} color={grey} />
      <g transform="translate(2262 917)">
        <circle r="31" fill="#a4a7ad" />
        <path d="M-19 -4 L0 -13 L19 -4 L0 5 Z M-11 3 L0 8 L11 3 V11 Q0 18 -11 11 Z" fill="#fff" />
      </g>
      <Label x={2263} y={988} lines={["АТВ"]} color={grey} />

      <Label x={3200} y={273} lines={["БУЮК ИПАК", "ЙУЛИ"]} color="#a7a6cf" size={39} />
      <circle cx="2802" cy="680" r="31" fill="#f27f86" />
      <text x="2802" y="694" textAnchor="middle" fontSize="38" fontWeight="700" fill="#fff">Н</text>
      <Label x={2803} y={755} lines={["Родильный", "комплекс № 6"]} color="#ea6b74" />
      <g transform="translate(2772 905)">
        <circle r="31" fill="#a4a7ad" />
        <path d="M-13 -14 Q0 -24 6 -14 L-4 -6 L12 -2 L8 14 L-14 16 L-6 4 Z" fill="#fff" />
      </g>
      <Label x={2770} y={976} lines={["Академия наук"]} color={grey} />
      <g transform="translate(3541 1004)">
        <circle r="31" fill="#a4a7ad" />
        <path d="M-3 -20 H3 V-9 H14 V-3 H3 V20 H-3 V-3 H-14 V-9 H-3 Z" fill="#fff" />
      </g>
      <Label x={3496} y={975} lines={["Собор", "Святейшего", "Сердца Иисуса"]} color={grey} anchor="end" />
      <Star x={3948} y={560} />
      <Label x={3948} y={631} lines={["Покровская", "церковь"]} color={green} />
      <g transform="translate(3966 1139)">
        <circle r="31" fill="#b87fdc" />
        <path d="M-13 17 V0 A13 14 0 0 1 13 0 V17 M-8 17 L0 0 L8 17 M-18 18 H18" fill="none" stroke="#fff" strokeWidth="5" />
      </g>
      <Label x={3967} y={1213} lines={["Ашхабад"]} color="#b375d6" />

      <path d="M2042 720 L2062 694 L2090 660 Q2112 656 2096 684 Z" fill="#777" opacity=".55" />
      <path d="M2037 722 L2044 670 L2082 650 Q2070 690 2037 722 Z" fill="#1e98ff" />
      <circle cx="2045" cy="634" r="40" fill="#1e98ff" />
      <circle cx="2045" cy="634" r="28" fill="#fff" />
    </svg>
  );
}

const control = "bg-white rounded-[3px] shadow-[0_1px_3px_rgba(0,0,0,0.35)]";

function YandexMap() {
  return (
    <section className={`relative min-h-[300px] flex-1 overflow-hidden ${ARIAL}`} aria-label="Карта">
      <MapDrawing />
      <div className="absolute inset-x-3 top-[11px] flex h-[33px] items-stretch text-[15px] text-black">
        <button type="button" aria-label="Моё местоположение" className={`grid w-[33px] place-items-center ${control}`}>
          <svg viewBox="0 0 19 19" className="size-[19px]"><path d="M19 0 L12 19 L10 9 L0 8 Z" fill="#333" /></svg>
        </button>
        <form className="ml-3 flex rounded-[3px] shadow-[0_1px_3px_rgba(0,0,0,0.35)]" onSubmit={(e) => e.preventDefault()}>
          <input aria-label="Адрес или объект" placeholder="Адрес или объект" className="w-[297px] rounded-l-[3px] bg-white px-3 outline-none placeholder:text-[#9a9eb0]" />
          <button type="submit" className="w-[74px] rounded-r-[3px] bg-[#ffdb4d]">Найти</button>
        </form>
        <button type="button" className={`ml-auto flex w-[103px] items-center pl-[5px] ${control}`}>
          <svg viewBox="0 0 19 19" className="size-[19px]"><circle cx="9" cy="10" r="9" fill="#bdbdbd" /><path d="M9 1 A9 9 0 0 1 18 10" fill="none" stroke="#222" strokeWidth="2" /></svg>
          <span className="ml-3">Пробки</span>
        </button>
        <button type="button" className={`ml-3 flex w-[100px] items-center pl-1 ${control}`}>
          <svg viewBox="0 0 23 19" className="h-[19px] w-[23px]" fill="none" stroke="#333" strokeWidth="1.300"><path d="M11.500 1 L22 6 L11.500 11 L1 6 Z M4 8 L1 10 L11.500 15 L22 10 L19 8 M4 12 L1 13.500 L11.500 18.300 L22 13.500 L19 12" /></svg>
          <span className="ml-2">Слои</span>
          <svg viewBox="0 0 14 8" className="ml-[5px] h-2 w-[14px]"><path d="M1 1 L7 7 L13 1" fill="none" stroke="#222" strokeWidth="1.300" /></svg>
        </button>
        <button type="button" aria-label="Развернуть карту" className={`ml-3 grid w-[33px] place-items-center ${control}`}>
          <svg viewBox="0 0 18 18" className="size-[18px]" fill="#555"><path d="M18 0 V8 L15 5 L11 9 L9 7 L13 3 L10 0 Z M0 18 V10 L3 13 L7 9 L9 11 L5 15 L8 18 Z" /></svg>
        </button>
      </div>
      <div className="absolute top-[127px] left-3 flex w-[33px] flex-col items-center">
        <button type="button" aria-label="Приблизить" className={`grid size-[33px] place-items-center ${control}`}>
          <svg viewBox="0 0 17 17" className="size-[17px]"><path d="M6 0 H11 V6 H17 V11 H11 V17 H6 V11 H0 V6 H6 Z" fill="#666" /></svg>
        </button>
        <div className="h-[46px] w-[9px] border-x-2 border-[#c4c4c0] bg-white/70" />
        <button type="button" aria-label="Масштаб" className={`grid h-[18px] w-[33px] place-items-center ${control}`}>
          <svg viewBox="0 0 13 5" className="h-[5px] w-[13px]"><path d="M0 .5 H13 M0 4.500 H13" stroke="#666" strokeDasharray="1 3" /></svg>
        </button>
        <div className="h-[113px] w-[9px] border-x-2 border-[#c4c4c0] bg-white/70" />
        <button type="button" aria-label="Отдалить" className={`grid size-[33px] place-items-center ${control}`}>
          <span className="h-[5px] w-[17px] bg-[#666]" />
        </button>
      </div>
    </section>
  );
}

/* ---------- taskbar ---------- */

function Taskbar() {
  return (
    <footer className="flex h-10 shrink-0 items-stretch bg-[#424242] text-white">
      <button type="button" aria-label="Пуск" className="grid w-12 place-items-center">
        <svg viewBox="0 0 16 16" className="size-4" fill="#fff"><path d="M0 2 L6.500 1 V7.500 H0 Z M7.500 1 L16 0 V7.500 H7.500 Z M0 8.500 H6.500 V15 L0 14 Z M7.500 8.500 H16 V16 L7.500 15 Z" /></svg>
      </button>
      <button type="button" aria-label="WebStorm" className="ml-[7px] grid w-10 place-items-center border-b-2 border-[#76b9ed]">
        <WebStormIcon className="size-6" />
      </button>
      <button type="button" aria-label="Google Chrome" className="ml-[5px] grid w-12 place-items-center border-b-2 border-[#76b9ed] bg-[#6a6a6a]">
        <svg viewBox="0 0 48 48" className="size-6">
          <circle cx="24" cy="24" r="24" fill="#2a9a48" />
          <path d="M24 24 L3.200 12 A24 24 0 0 1 44.800 12 Z" fill="#ea4335" />
          <path d="M24 12 H44.800 A24 24 0 0 1 24 48 L34.400 30 Z" fill="#fcc934" />
          <circle cx="24" cy="24" r="12" fill="#fff" /><circle cx="24" cy="24" r="9" fill="#1a73e8" />
        </svg>
      </button>
      <div className="ml-auto flex items-center">
        <svg viewBox="0 0 23 24" className="h-6 w-[23px]">
          <path d="M1 2 Q9 -1 17 1 Q19 3 18 5 Q23 6 22 10 Q18 12 18 13 Q18 16 9 16 Q0 16 1 12 L3 11 Q0 9 2 7 Q0 5 1 2 Z" fill="#f79a1e" />
          <path d="M2 5 Q9 8 18 5 M3 10 Q10 13 20 10" stroke="#c96f08" fill="none" />
          <path d="M7 23 L11 19 L15 23" stroke="#5ec40f" strokeWidth="3" fill="none" />
        </svg>
        <span className="ml-2 text-sm">USD/PKR</span>
        <span className="ml-[9px] text-sm text-[#16c60c]">+0.64%</span>
        <button type="button" aria-label="Показать скрытые значки" className="ml-6">
          <svg viewBox="0 0 12 8" className="h-2 w-3"><path d="M1 7 L6 1 L11 7" stroke="#fff" strokeWidth="1.300" fill="none" /></svg>
        </button>
        <svg viewBox="0 0 14 13" className="ml-3 h-[13px] w-[14px]" fill="none" stroke="#fff">
          <path d="M1 12 Q1 1 13 1" opacity=".6" /><path d="M4 12 Q4 4 13 4" /><path d="M7 12 Q7 7 13 7" /><circle cx="11.500" cy="11" r="1" fill="#fff" />
        </svg>
        <span className="ml-[10px] text-xs">ENG</span>
        <span className="ml-3 text-center text-[11px] leading-[18px]">18:38<br />15.07.2023</span>
        <button type="button" aria-label="Уведомления" className="relative ml-[17px] mr-[13px] h-6 w-[23px]">
          <svg viewBox="0 0 23 24" className="h-6 w-[23px]">
            <path d="M0 1 H16 V14 H8 L4 17 V14 H0 Z" fill="#fff" />
            <path d="M3 5 H13 M3 8 H13 M3 11 H9" stroke="#424242" strokeWidth="1.200" />
            <circle cx="15" cy="16" r="7.500" fill="#424242" stroke="#bbb" />
          </svg>
          <span className="absolute right-1 bottom-0 w-[9px] text-center text-[11px] leading-4">1</span>
        </button>
        <span className="h-10 w-1 border-l border-[#8a8a8a]" />
      </div>
    </footer>
  );
}

/* ---------- page ---------- */

export default function App() {
  return (
    <div className={`flex h-screen flex-col overflow-hidden bg-white ${UI}`}>
      <div className="shrink-0">
        <TabStrip />
        <Toolbar />
      </div>
      <div className={`relative flex min-h-0 flex-1 flex-col pr-[2px] ${SITE}`}>
        <span className="absolute top-0 right-0 h-[587px] w-[2px] bg-[#d81b5b]" />
        <main className="mx-auto flex min-h-0 w-full max-w-[1346px] flex-1 flex-col pt-[27px] text-[#0b0722]">
          <Header />
          <Nav />
          <nav aria-label="Навигация" className="mt-[18px] flex items-center text-base leading-6">
            <a href="#home" className="underline underline-offset-2">Главная</a>
            <svg viewBox="0 0 10 16" className="mx-5 h-4 w-[10px]" {...iconProps} strokeWidth="2.500"><path d="M2 1 L8 8 L2 15" /></svg>
            <span className="text-[#6d6a7e]">Контакты</span>
          </nav>
          <h1 className="mt-12 text-[42px] leading-[52px] font-medium">Контакты</h1>
          <div className="mt-[72px] grid grid-cols-2 gap-2 text-lg leading-6 font-light">
            <div className="flex flex-col items-center gap-[13px]">
              <ContactCircle>
                <svg viewBox="0 0 24 30" className="h-[30px] w-6" {...iconProps} strokeWidth="2.500"><path d="M12 2 C18 2 22 6 22 12 C22 19 17 24 13 28 Q12 29 11 28 C7 24 2 19 2 12 C2 6 6 2 12 2 Z" /><circle cx="12" cy="12" r="4" /></svg>
              </ContactCircle>
              <p>Узбекистан, г. Ташкент, ул. Бухара, 1</p>
            </div>
            <div className="flex flex-col items-center gap-[13px]">
              <ContactCircle>
                <svg viewBox="0 0 28 28" className="size-7" {...iconProps} strokeWidth="2.400">
                  <path d="M3 5 Q6 2 9 5 L11 9 Q12 11 10 13 Q10 15 15 18 Q17 16 19 17 L23 19 Q26 22 22 25 Q18 28 10 21 Q0 12 3 5 Z" />
                  <path d="M14 7 Q20 7 21 14 M14 2 Q25 2 26 14" />
                </svg>
              </ContactCircle>
              <a href="#phone" className="block w-[182px] bg-gradient-to-r from-[#0b0722] to-white bg-clip-text whitespace-nowrap text-transparent">+998 (90) 826-78-9</a>
            </div>
          </div>
          <div className="mt-[58px] flex min-h-0 flex-1 flex-col">
            <YandexMap />
          </div>
        </main>
      </div>
      <Taskbar />
    </div>
  );
}
